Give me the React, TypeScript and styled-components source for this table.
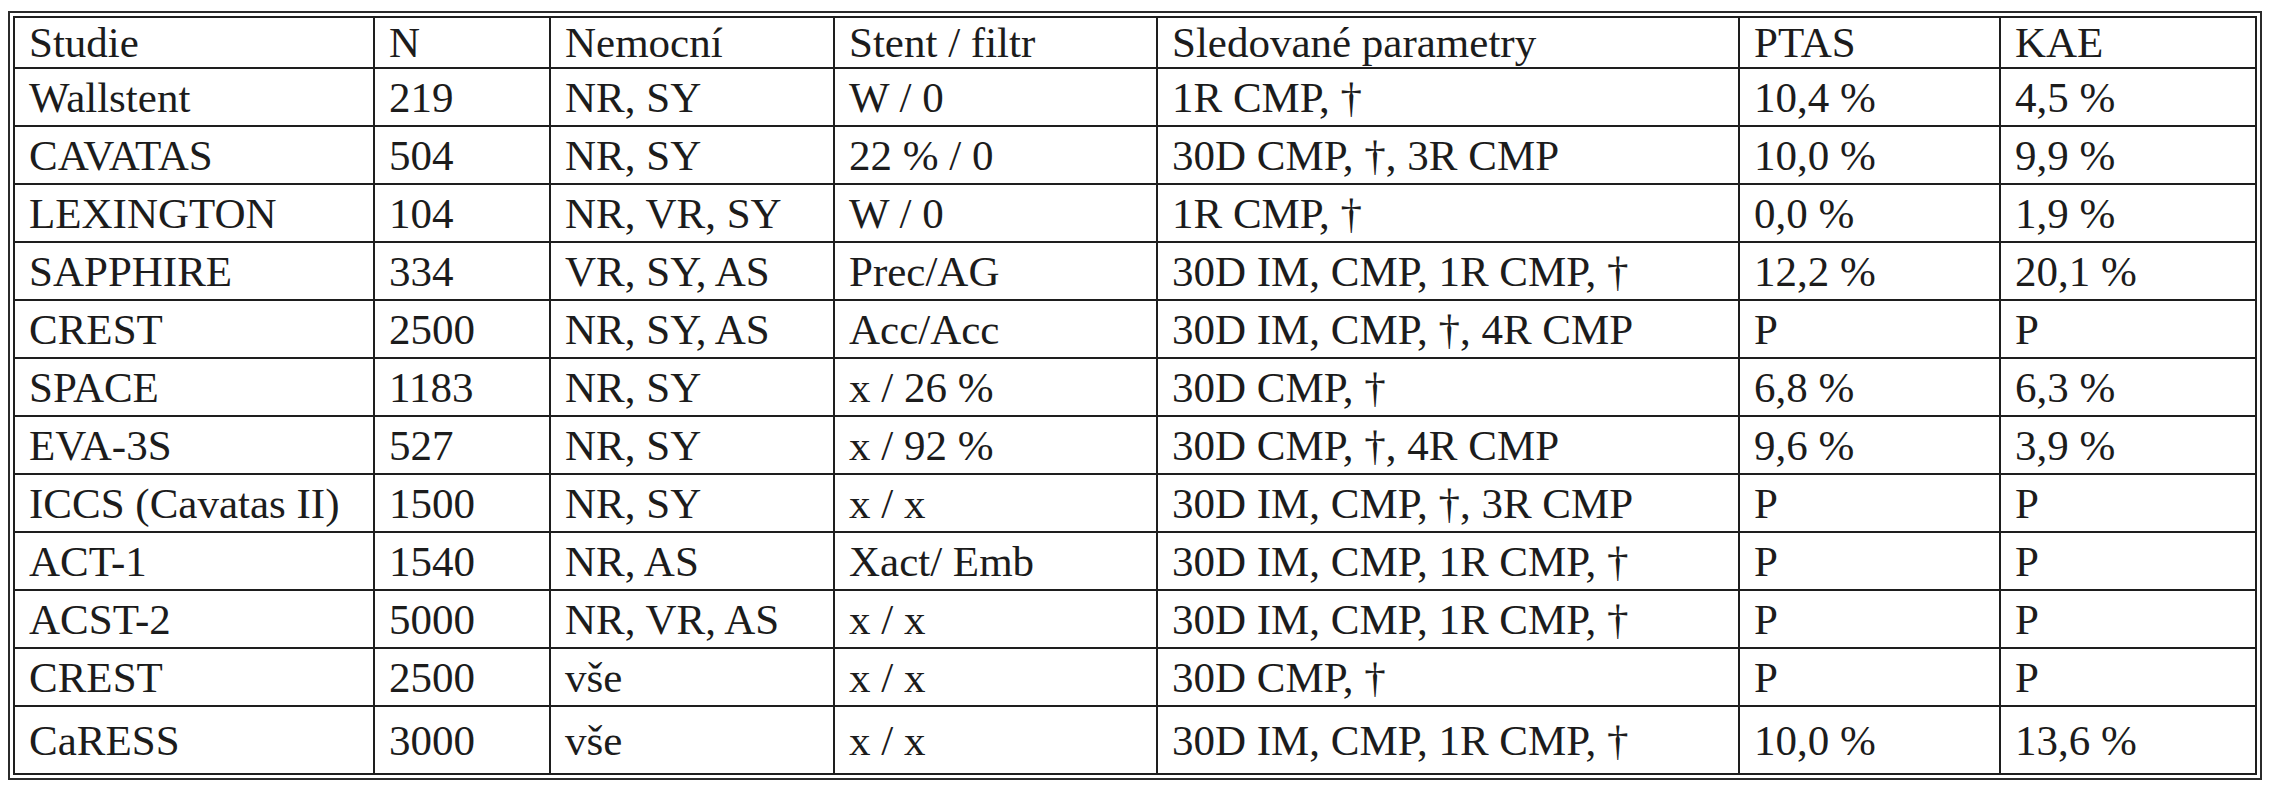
import styled, { createGlobalStyle } from "styled-components";

const GlobalStyle = createGlobalStyle`
  html, body {
    margin: 0;
    padding: 0;
    background: #ffffff;
  }
`;

const Page = styled.div`
  padding: 11px 0 0 8px;
`;

const Frame = styled.div`
  display: inline-block;
  border: 2px solid #2b2b2b;
  padding: 3px;
`;

const Table = styled.table`
  width: 2244px;
  table-layout: fixed;
  border-collapse: collapse;
  border: 2px solid #1e1e1e;
  font-family: "Liberation Serif", "Times New Roman", serif;
  font-size: 43px;
  color: #1c1c1c;
`;

const Row = styled.tr<{ $h: number }>`
  height: ${(p) => p.$h}px;
`;

const Cell = styled.td`
  border: 2px solid #1e1e1e;
  padding: 0 0 0 14px;
  vertical-align: middle;
  white-space: nowrap;
  line-height: 1;
  overflow: hidden;
`;

const widths = [360, 176, 284, 323, 582, 261, 256];

const header = [
  "Studie",
  "N",
  "Nemocní",
  "Stent / filtr",
  "Sledované parametry",
  "PTAS",
  "KAE",
];

const rows = [
  ["Wallstent", "219", "NR, SY", "W / 0", "1R CMP, †", "10,4 %", "4,5 %"],
  ["CAVATAS", "504", "NR, SY", "22 % / 0", "30D CMP, †, 3R CMP", "10,0 %", "9,9 %"],
  ["LEXINGTON", "104", "NR, VR, SY", "W / 0", "1R CMP, †", "0,0 %", "1,9 %"],
  ["SAPPHIRE", "334", "VR, SY, AS", "Prec/AG", "30D IM, CMP, 1R CMP, †", "12,2 %", "20,1 %"],
  ["CREST", "2500", "NR, SY, AS", "Acc/Acc", "30D IM, CMP, †, 4R CMP", "P", "P"],
  ["SPACE", "1183", "NR, SY", "x / 26 %", "30D CMP, †", "6,8 %", "6,3 %"],
  ["EVA-3S", "527", "NR, SY", "x / 92 %", "30D CMP, †, 4R CMP", "9,6 %", "3,9 %"],
  ["ICCS (Cavatas II)", "1500", "NR, SY", "x / x", "30D IM, CMP, †, 3R CMP", "P", "P"],
  ["ACT-1", "1540", "NR, AS", "Xact/ Emb", "30D IM, CMP, 1R CMP, †", "P", "P"],
  ["ACST-2", "5000", "NR, VR, AS", "x / x", "30D IM, CMP, 1R CMP, †", "P", "P"],
  ["CREST", "2500", "vše", "x / x", "30D CMP, †", "P", "P"],
  ["CaRESS", "3000", "vše", "x / x", "30D IM, CMP, 1R CMP, †", "10,0 %", "13,6 %"],
];

export default function App() {
  return (
    <Page>
      <GlobalStyle />
      <Frame>
        <Table>
          <colgroup>
            {widths.map((w, i) => (
              <col key={i} style={{ width: w }} />
            ))}
          </colgroup>
          <tbody>
            <Row $h={51}>
              {header.map((h) => (
                <Cell key={h}>{h}</Cell>
              ))}
            </Row>
            {rows.map((r, i) => (
              <Row key={i} $h={i === rows.length - 1 ? 68 : 58}>
                {r.map((c, j) => (
                  <Cell key={j}>{c}</Cell>
                ))}
              </Row>
            ))}
          </tbody>
        </Table>
      </Frame>
    </Page>
  );
}
